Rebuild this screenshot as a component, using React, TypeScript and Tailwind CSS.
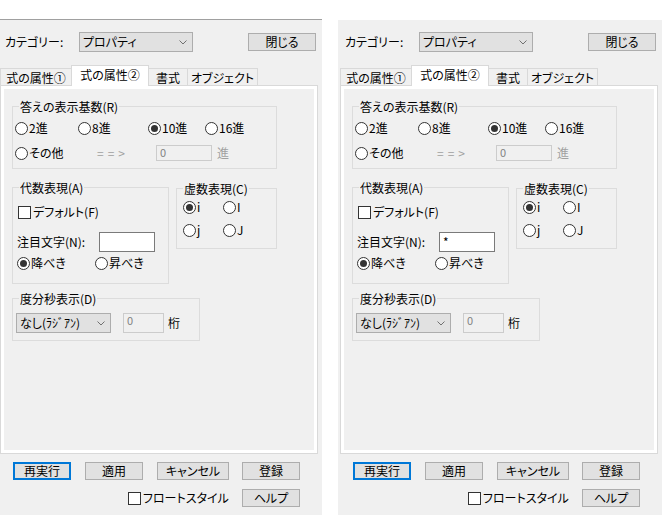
import type { ReactNode } from "react";

// Windows-style property dialog, shown twice side by side
function Chevron() {
  return (
    <svg width="8" height="5" viewBox="0 0 8 5" className="shrink-0">
      <path d="M0.5 0.5 L4 4 L7.5 0.5" stroke="#707070" fill="none" />
    </svg>
  );
}

function Radio({ checked }: { checked?: boolean }) {
  return (
    <span className="flex h-[13px] w-[13px] shrink-0 items-center justify-center rounded-full border border-[#333333] bg-white">
      {checked && <span className="h-[7px] w-[7px] rounded-full bg-[#333333]" />}
    </span>
  );
}

function RadioItem({ label, checked, className = "" }: { label: string; checked?: boolean; className?: string }) {
  return (
    <div className={`flex items-center gap-px ${className}`}>
      <Radio checked={checked} />
      <span>{label}</span>
    </div>
  );
}

function CheckBox({ className = "" }: { className?: string }) {
  return <span className={`block h-[13px] w-[13px] shrink-0 border border-[#333333] bg-white ${className}`} />;
}

function Combo({ value, className = "" }: { value: string; className?: string }) {
  return (
    <div className={`flex items-center border border-[#adadad] bg-[#e1e1e1] pl-[3px] pr-[5px] ${className}`}>
      <span className="whitespace-nowrap">{value}</span>
      <span className="ml-auto">
        <Chevron />
      </span>
    </div>
  );
}

function Button({ children, className = "", primary }: { children: ReactNode; className?: string; primary?: boolean }) {
  return (
    <div
      className={`flex h-[18px] items-center justify-center bg-[#e1e1e1] ${
        primary ? "border-2 border-[#0078d7]" : "border border-[#adadad]"
      } ${className}`}
    >
      {children}
    </div>
  );
}

function DisabledBox({ className = "" }: { className?: string }) {
  return (
    <div className={`border border-[#cccccc] bg-[#f0f0f0] pl-[3px] text-[11px] leading-[13px] text-[#838383] ${className}`}>
      0
    </div>
  );
}

function GroupBox({ title, className = "", children }: { title: string; className?: string; children: ReactNode }) {
  return (
    <div className={`relative flex flex-col border border-[#dcdcdc] ${className}`}>
      <span className="absolute left-[6px] top-[-7px] bg-[#f0f0f0] px-px leading-[14px]">{title}</span>
      {children}
    </div>
  );
}

function Tab({ label, active, className = "" }: { label: string; active?: boolean; className?: string }) {
  return active ? (
    <div className={`relative z-10 -mb-px flex h-[21px] justify-center border-x border-t border-[#d9d9d9] bg-white pt-[2px] ${className}`}>
      {label}
    </div>
  ) : (
    <div className={`flex h-[17px] justify-center border-x border-t border-[#d9d9d9] bg-[#f0f0f0] pt-[2px] ${className}`}>
      {label}
    </div>
  );
}

function Dialog({ mark, topLine }: { mark: string; topLine: string }) {
  return (
    <div className={`flex h-[496px] w-[324px] shrink-0 flex-col border-t bg-[#f0f0f0] ${topLine}`}>
      {/* category selector + close */}
      <div className="mt-[12px] flex h-[20px] items-center pl-[7px] pr-[6px]">
        <span className="w-[74px] shrink-0">カテゴリー:</span>
        <Combo value="プロパティ" className="h-[20px] w-[114px]" />
        <Button className="ml-auto w-[68px]">閉じる</Button>
      </div>

      {/* tab strip */}
      <div className="mt-[13px] flex h-[20px] items-end pl-[2px]">
        <Tab label="式の属性①" className="w-[72px]" />
        <Tab label="式の属性②" active className="-ml-px w-[78px]" />
        <Tab label="書式" className="-ml-px w-[40px]" />
        <Tab label="オブジェクト" className="-ml-px w-[71px]" />
      </div>

      {/* tab page */}
      <div className="ml-[2px] flex h-[369px] w-[318px] flex-col border border-[#d9d9d9] bg-white p-[3px]">
        <div className="flex flex-1 flex-col bg-[#f0f0f0] pl-[8px] pt-[17px]">
          <GroupBox title="答えの表示基数(R)" className="h-[63px] w-[265px] pl-[2px] pt-[13px]">
            <div className="flex h-[16px] items-center">
              <RadioItem label="2進" className="w-[63px]" />
              <RadioItem label="8進" className="w-[70px]" />
              <RadioItem label="10進" checked className="w-[57px]" />
              <RadioItem label="16進" />
            </div>
            <div className="mt-[9px] flex h-[16px] items-center">
              <RadioItem label="その他" className="w-[82px]" />
              <span className="w-[59px] tracking-[4px] text-[#a0a0a0]">==&gt;</span>
              <DisabledBox className="h-[16px] w-[56px]" />
              <span className="ml-[5px] text-[#a0a0a0]">進</span>
            </div>
          </GroupBox>

          <div className="mt-[18px] flex items-start">
            <GroupBox title="代数表現(A)" className="h-[97px] w-[157px] pl-[4px] pt-[16px]">
              <div className="flex h-[16px] items-center">
                <CheckBox className="ml-px" />
                <span className="ml-[2px]">デフォルト(F)</span>
              </div>
              <div className="mt-[12px] flex h-[20px] items-center">
                <span className="w-[82px]">注目文字(N):</span>
                <div className="flex h-[20px] w-[56px] items-center border border-[#7a7a7a] bg-white pl-[3px]">{mark}</div>
              </div>
              <div className="mt-[3px] flex h-[16px] items-center">
                <RadioItem label="降べき" checked className="w-[78px]" />
                <RadioItem label="昇べき" />
              </div>
            </GroupBox>

            <GroupBox title="虚数表現(C)" className="ml-[7px] mt-px h-[61px] w-[101px] pl-[6px] pt-[10px]">
              <div className="flex h-[16px] items-center">
                <RadioItem label="i" checked className="w-[40px]" />
                <RadioItem label="I" />
              </div>
              <div className="mt-[7px] flex h-[16px] items-center">
                <RadioItem label="j" className="w-[40px]" />
                <RadioItem label="J" />
              </div>
            </GroupBox>
          </div>

          <GroupBox title="度分秒表示(D)" className="mt-[14px] h-[43px] w-[188px] pl-[3px] pt-[14px]">
            <div className="flex h-[20px] items-center">
              <Combo value="なし(ﾗｼﾞｱﾝ)" className="h-[20px] w-[95px] pr-[4px]" />
              <DisabledBox className="ml-[12px] h-[20px] w-[41px]" />
              <span className="ml-[4px]">桁</span>
            </div>
          </GroupBox>
        </div>
      </div>

      {/* command buttons */}
      <div className="mt-[8px] flex pl-[15px]">
        <Button primary className="w-[58px]">再実行</Button>
        <Button className="ml-[14px] w-[58px]">適用</Button>
        <Button className="ml-[14px] w-[72px]">キャンセル</Button>
        <Button className="ml-[13px] w-[58px]">登録</Button>
      </div>
      <div className="mt-[9px] flex w-[302px] items-center pl-[130px]">
        <CheckBox />
        <span className="ml-[2px]">フロートスタイル</span>
        <Button className="ml-auto w-[58px]">ヘルプ</Button>
      </div>
    </div>
  );
}

export default function App() {
  return (
    <div className="flex h-[515px] w-[662px] overflow-hidden bg-white pt-[19px] font-['Noto_Sans_CJK_JP','Liberation_Sans',sans-serif] text-[12px] leading-[14px] text-black [font-feature-settings:'palt']">
      <div className="-ml-[2px]">
        <Dialog mark="" topLine="border-[#a0a0a0]" />
      </div>
      <div className="ml-[16px]">
        <Dialog mark="*" topLine="border-white" />
      </div>
    </div>
  );
}
